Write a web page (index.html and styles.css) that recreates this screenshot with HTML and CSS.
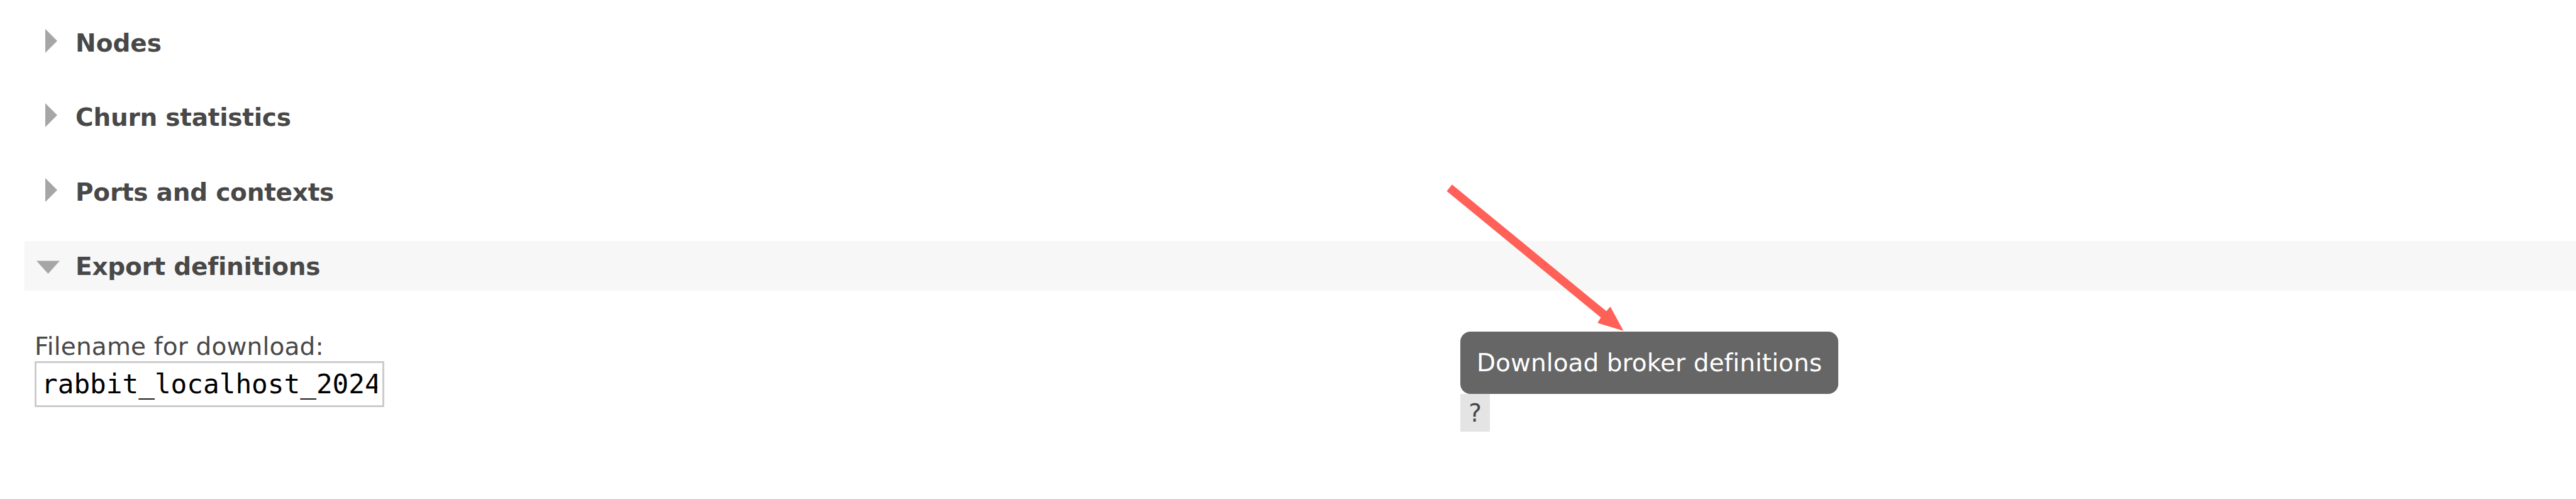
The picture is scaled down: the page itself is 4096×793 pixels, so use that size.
FILE: index.html
```
<!DOCTYPE html>
<html lang="en">
<head>
  <meta charset="UTF-8">
  <title>RabbitMQ Management</title>
  <link rel="stylesheet" href="styles.css">
</head>
<body>
  <div class="section">
    <h2 class="nodes"><svg class="arrow" viewBox="0 0 38 38"><path d="M14 0V38L33 19Z"/></svg><span>Nodes</span></h2>
  </div>
  <div class="section">
    <h2><svg class="arrow" viewBox="0 0 38 38"><path d="M14 0V38L33 19Z"/></svg><span>Churn statistics</span></h2>
  </div>
  <div class="section">
    <h2><svg class="arrow" viewBox="0 0 38 38"><path d="M14 0V38L33 19Z"/></svg><span>Ports and contexts</span></h2>
  </div>
  <div class="section open">
    <h2><svg class="arrow" viewBox="0 0 38 38"><path d="M0 13.5H37L18.5 34Z"/></svg><span>Export definitions</span></h2>
    <form class="definitions">
      <div class="filename">
        <label for="filename">Filename for download:</label>
        <input type="text" id="filename" value="rabbit_localhost_2024">
      </div>
      <div class="download">
        <div class="tooltip"><span>Download broker definitions</span></div>
        <span class="help">?</span>
      </div>
    </form>
  </div>

  <svg class="pointer" viewBox="0 0 352 292"><path d="M13.3 2.7L3 15.7L304.7 263L298.3 273.7L349 289L323.3 241.7L315.7 250.7Z"/></svg>
</body>
</html>
```

FILE: styles.css
```
* {
  box-sizing: border-box;
}

body {
  margin: 0;
  padding: 27.6px 0 0 39px;
  height: 793px;
  overflow: hidden;
  background: #fff;
  color: #484848;
  font-family: Verdana, 'DejaVu Sans', sans-serif;
  font-size: 39px;
  font-variant-ligatures: none;
  position: relative;
}

h2 {
  display: flex;
  align-items: flex-start;
  height: 79px;
  margin: 0 0 39.6px;
  padding: 18px 0 0 19px;
  font-size: 39px;
  line-height: 46px;
  font-weight: bold;
  letter-spacing: -0.24px;
  white-space: nowrap;
}

h2.nodes {
  letter-spacing: 0;
}

.arrow {
  width: 38px;
  height: 38px;
  margin-right: 24px;
  fill: #a6a6a6;
}

.open h2 {
  background: #f7f7f7;
  margin-bottom: 0;
}

.definitions {
  display: grid;
  grid-template-columns: 2267px 1fr;
  padding: 65px 0 0 16px;
}

.filename {
  display: flex;
  flex-direction: column;
  align-items: flex-start;
  padding-top: 1px;
}

.filename label {
  line-height: 46px;
  letter-spacing: 0.17px;
  white-space: nowrap;
}

.filename input {
  width: 556px;
  height: 73px;
  padding: 0 8px 2px;
  border: 3px solid #ccc;
  border-radius: 0;
  background: #fff;
  color: #000;
  font-family: 'DejaVu Sans Mono', monospace;
  font-size: 42.7px;
}

.tooltip {
  width: 601px;
  height: 99px;
  padding: 27px 0 0 26px;
  border-radius: 16px;
  background: #666;
  color: #fff;
  line-height: 46px;
  letter-spacing: 0.06px;
  white-space: nowrap;
}

.help {
  display: block;
  width: 47px;
  height: 60px;
  background: #e4e4e4;
  line-height: 62px;
  text-align: center;
}

.pointer {
  position: absolute;
  left: 2298.1px;
  top: 290.7px;
  width: 285.8px;
  height: 237.1px;
  fill: #ff6058;
}
```
